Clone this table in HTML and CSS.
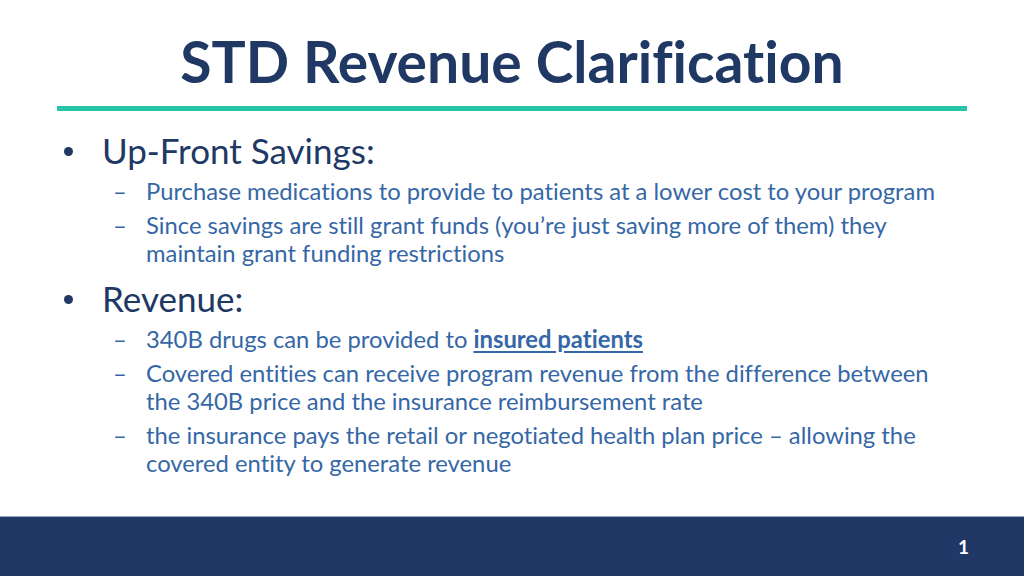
FILE: index.html
```html
<!DOCTYPE html>
<html>
<head>
<meta charset="utf-8">
<link rel="stylesheet" href="styles.css">
</head>
<body>
<div class="slide">
  <header class="title-block">
    <h1 class="title">STD Revenue Clarification</h1>
    <div class="rule"></div>
  </header>
  <main class="content">
    <ul class="level1">
      <li class="item1">
        <span class="text1">Up-Front Savings:</span>
        <ul class="level2">
          <li class="item2">Purchase medications to provide to patients at a lower cost to your program</li>
          <li class="item2">Since savings are still grant funds (you’re just saving more of them) they maintain grant funding restrictions</li>
        </ul>
      </li>
      <li class="item1">
        <span class="text1">Revenue:</span>
        <ul class="level2">
          <li class="item2">340B drugs can be provided to <a class="link">insured patients</a></li>
          <li class="item2">Covered entities can receive program revenue from the difference between the 340B price and the insurance reimbursement rate</li>
          <li class="item2">the insurance pays the retail or negotiated health plan price – allowing the covered entity to generate revenue</li>
        </ul>
      </li>
    </ul>
  </main>
  <footer class="footer">
    <span class="page-num">1</span>
  </footer>
</div>
</body>
</html>
```
FILE: styles.css
```css
* { box-sizing: border-box; }
html, body { margin: 0; padding: 0; background: #ffffff; }
.slide {
  width: 1024px;
  height: 576px;
  display: flex;
  flex-direction: column;
  font-family: Lato, "Liberation Sans", sans-serif;
  font-variant-ligatures: none;
  overflow: hidden;
}
.title-block {
  padding: 0 57px;
}
.title {
  margin: 0;
  height: 106px;
  padding-top: 31px;
  text-align: center;
  font-size: 57px;
  line-height: 60px;
  font-weight: 700;
  color: #203864;
}
.rule {
  height: 5px;
  background: #25c5a5;
}
.content {
  flex: 1;
  padding: 17.5px 70px 0 55px;
}
.level1 {
  list-style: none;
  margin: 0;
  padding: 0;
}
.item1 {
  position: relative;
  padding-left: 47px;
}
.item1 + .item1 {
  margin-top: 10px;
}
.item1::before {
  content: "";
  position: absolute;
  left: 9px;
  top: 18.5px;
  width: 9px;
  height: 9px;
  border-radius: 50%;
  background: #203864;
}
.text1 {
  display: block;
  font-size: 35px;
  line-height: 42px;
  color: #203864;
}
.level2 {
  list-style: none;
  margin: 0;
  padding: 0 0 0 44px;
}
.item2 {
  position: relative;
  font-size: 23.8px;
  line-height: 28px;
  color: #3567a6;
  margin-top: 6px;
}
.item2::before {
  content: "–";
  position: absolute;
  left: -33px;
  top: 0;
}
.link {
  font-weight: 700;
  text-decoration: underline;
  text-underline-offset: 3px;
  color: #3567a6;
}
.footer {
  height: 60px;
  background: #213766;
  border-top: 1px solid #9aa6bd;
  display: flex;
  justify-content: flex-end;
  align-items: center;
  padding-right: 55px;
}
.page-num {
  color: #ffffff;
  font-weight: 700;
  font-size: 19px;
}
```
